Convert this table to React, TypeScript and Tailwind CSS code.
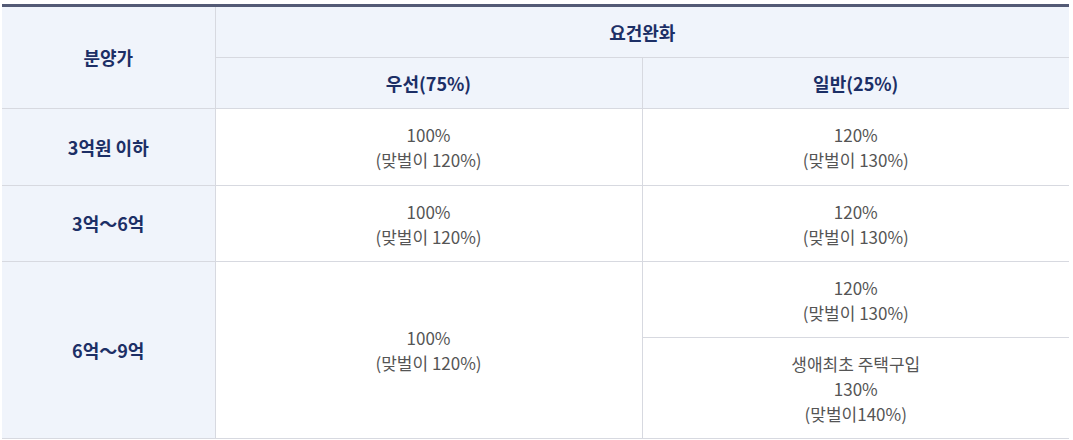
export default function App() {
  const th =
    "border border-[#d7d9e0] bg-[#f0f4fb] text-[18px] font-semibold text-[#1c2f66] text-center align-middle";
  const td =
    "border border-[#d7d9e0] bg-white text-[17px] leading-[25px] text-[#555555] text-center align-middle";

  return (
    <div
      className="w-[1073px] h-[440px] bg-white pt-[4px] px-[2px]"
      style={{ fontFamily: '"Noto Sans CJK KR", "Noto Sans", sans-serif' }}
    >
      <table className="w-[1067px] table-fixed border-collapse border-t-[3px] border-t-[#535a75]">
        <colgroup>
          <col className="w-[213px]" />
          <col className="w-[427px]" />
          <col className="w-[427px]" />
        </colgroup>
        <thead>
          <tr className="h-[52px]">
            <th rowSpan={2} className={`${th} border-l-0 border-t-0`}>
              분양가
            </th>
            <th colSpan={2} className={`${th} border-r-0 border-t-0`}>
              요건완화
            </th>
          </tr>
          <tr className="h-[51px]">
            <th className={th}>우선(75%)</th>
            <th className={`${th} border-r-0`}>일반(25%)</th>
          </tr>
        </thead>
        <tbody>
          <tr className="h-[77px]">
            <th className={`${th} border-l-0`}>3억원 이하</th>
            <td className={td}>
              100%
              <br />
              (맞벌이 120%)
            </td>
            <td className={`${td} border-r-0`}>
              120%
              <br />
              (맞벌이 130%)
            </td>
          </tr>
          <tr className="h-[76px]">
            <th className={`${th} border-l-0`}>3억～6억</th>
            <td className={td}>
              100%
              <br />
              (맞벌이 120%)
            </td>
            <td className={`${td} border-r-0`}>
              120%
              <br />
              (맞벌이 130%)
            </td>
          </tr>
          <tr className="h-[76px]">
            <th rowSpan={2} className={`${th} border-l-0`}>
              6억～9억
            </th>
            <td rowSpan={2} className={td}>
              100%
              <br />
              (맞벌이 120%)
            </td>
            <td className={`${td} border-r-0`}>
              120%
              <br />
              (맞벌이 130%)
            </td>
          </tr>
          <tr className="h-[101px]">
            <td className={`${td} border-r-0`}>
              생애최초 주택구입
              <br />
              130%
              <br />
              (맞벌이140%)
            </td>
          </tr>
        </tbody>
      </table>
    </div>
  );
}
